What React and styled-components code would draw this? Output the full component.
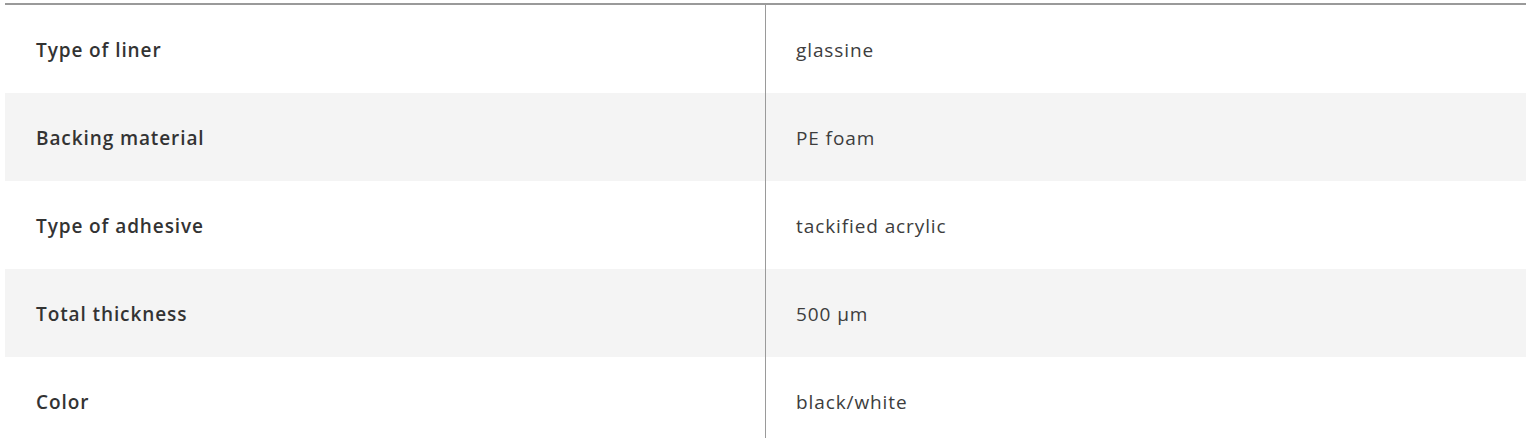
import React from "react";
import styled, { createGlobalStyle } from "styled-components";

const rows = [
  ["Type of liner", "glassine"],
  ["Backing material", "PE foam"],
  ["Type of adhesive", "tackified acrylic"],
  ["Total thickness", "500 µm"],
  ["Color", "black/white"],
];

export default function App() {
  return (
    <>
      <Global />
      <Wrap>
        <Table>
          <tbody>
            {rows.map(([label, value], i) => (
              <Row key={label} striped={i % 2 === 1}>
                <Label>{label}</Label>
                <Value>{value}</Value>
              </Row>
            ))}
          </tbody>
        </Table>
      </Wrap>
    </>
  );
}

const Global = createGlobalStyle`
  body {
    margin: 0;
    background: #fff;
    font-family: "Open Sans", "Noto Sans", sans-serif;
  }
`;

const Wrap = styled.div`
  padding: 3px 0 0 5px;
  overflow: hidden;
`;

const Table = styled.table`
  width: 1530px;
  border-collapse: separate;
  border-spacing: 0;
  border-top: 2px solid #9a9a9a;
`;

const Row = styled.tr`
  height: 88px;
  background: ${({ striped }) => (striped ? "#f4f4f4" : "#fff")};
`;

const Label = styled.td`
  width: 761px;
  box-sizing: border-box;
  padding: 2px 30px 0 31px;
  border-right: 1px solid #9a9a9a;
  font-size: 19px;
  letter-spacing: 0.9px;
  font-weight: 600;
  color: #333;
`;

const Value = styled.td`
  padding: 2px 30px 0;
  font-size: 19px;
  letter-spacing: 0.9px;
  font-weight: 400;
  color: #3d3d3d;
`;
